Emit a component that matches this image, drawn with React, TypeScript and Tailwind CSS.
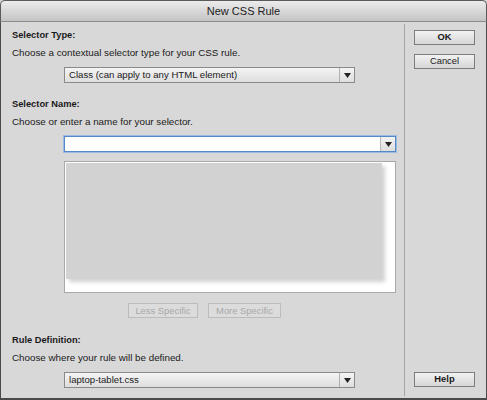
import { ReactNode } from 'react';

const font = { fontFamily: '"Liberation Sans", Arial, sans-serif' };

function Arrow() {
  return (
    <svg width="7" height="5" viewBox="0 0 7 5">
      <path d="M0 0 H7 L3.5 5 Z" fill="#222" />
    </svg>
  );
}

function Select({ label, width }: { label: string; width: string }) {
  return (
    <div className={`flex h-[16px] ${width} border border-[#8a8a8a] bg-gradient-to-b from-[#f4f4f4] to-[#dedede] text-[9.6px] text-[#1a1a1a]`}>
      <div className="flex-1 pl-[4px] leading-[14px]">{label}</div>
      <div className="flex w-[15px] items-center justify-center border-l border-[#b0b0b0]">
        <Arrow />
      </div>
    </div>
  );
}

function Button({ children, disabled = false, bold = false }: { children: ReactNode; disabled?: boolean; bold?: boolean }) {
  return (
    <div
      className={`flex h-[15px] items-center justify-center border text-[9.4px] ${
        disabled
          ? 'border-[#bcbcbc] bg-[#dcdcdc] text-[#a8a8a8]'
          : 'border-[#7d7d7d] bg-gradient-to-b from-[#f2f2f2] to-[#d6d6d6] text-[#1a1a1a]'
      } ${bold ? 'font-bold' : ''}`}
    >
      {children}
    </div>
  );
}

export default function App() {
  return (
    <div style={font} className="flex h-[400px] w-[487px] flex-col bg-[#d8d8d8]">
      <div className="flex h-[22px] items-center justify-center rounded-t-[5px] border border-b-[#8c8c8c] border-[#5a5a5a] bg-gradient-to-b from-[#ececec] to-[#c4c4c4] text-[11px] text-[#222]">
        New CSS Rule
      </div>
      <div className="flex flex-1 border-x border-b-2 border-[#4a4a4a]">
        <div className="w-[403px] pl-[11px] pt-[6px] text-[9.8px] leading-[14px] text-[#1a1a1a]">
          <div className="text-[9.3px] font-bold">Selector Type:</div>
          <div className="mt-[4px]">Choose a contextual selector type for your CSS rule.</div>
          <div className="mt-[7px] pl-[52px]">
            <Select label="Class (can apply to any HTML element)" width="w-[291px]" />
          </div>

          <div className="mt-[14px] text-[9.3px] font-bold">Selector Name:</div>
          <div className="mt-[4px]">Choose or enter a name for your selector.</div>
          <div className="mt-[7px] pl-[52px]">
            <div className="flex h-[16px] w-[332px] border border-[#5489c4] bg-white shadow-[0_0_0_1px_#9cbde3]">
              <div className="flex-1" />
              <div className="flex w-[15px] items-center justify-center border-l border-[#b8b8b8] bg-gradient-to-b from-[#f4f4f4] to-[#dedede]">
                <Arrow />
              </div>
            </div>
          </div>

          <div className="mt-[9px] pl-[52px]">
            <div className="h-[132px] w-[332px] border border-[#a8a8a8] bg-white p-px">
              <div className="h-[116px] w-[316px] bg-[#d2d2d2] shadow-[3px_3px_4px_#d2d2d2]" />
            </div>
          </div>

          <div className="mt-[10px] flex gap-[10px] pl-[116px]">
            <div className="w-[70px]">
              <Button disabled>Less Specific</Button>
            </div>
            <div className="w-[73px]">
              <Button disabled>More Specific</Button>
            </div>
          </div>

          <div className="mt-[15px] text-[9.3px] font-bold">Rule Definition:</div>
          <div className="mt-[4px]">Choose where your rule will be defined.</div>
          <div className="mt-[7px] pl-[52px]">
            <Select label="laptop-tablet.css" width="w-[291px]" />
          </div>
        </div>
        <div className="my-[2px] w-px bg-[#a4a4a4]" />
        <div className="flex flex-1 flex-col px-[9px] pb-[11px] pt-[8px]">
          <div className="w-[61px]">
            <Button bold>OK</Button>
          </div>
          <div className="mt-[9px] w-[61px]">
            <Button>Cancel</Button>
          </div>
          <div className="mt-auto w-[61px]">
            <Button bold>Help</Button>
          </div>
        </div>
      </div>
    </div>
  );
}
